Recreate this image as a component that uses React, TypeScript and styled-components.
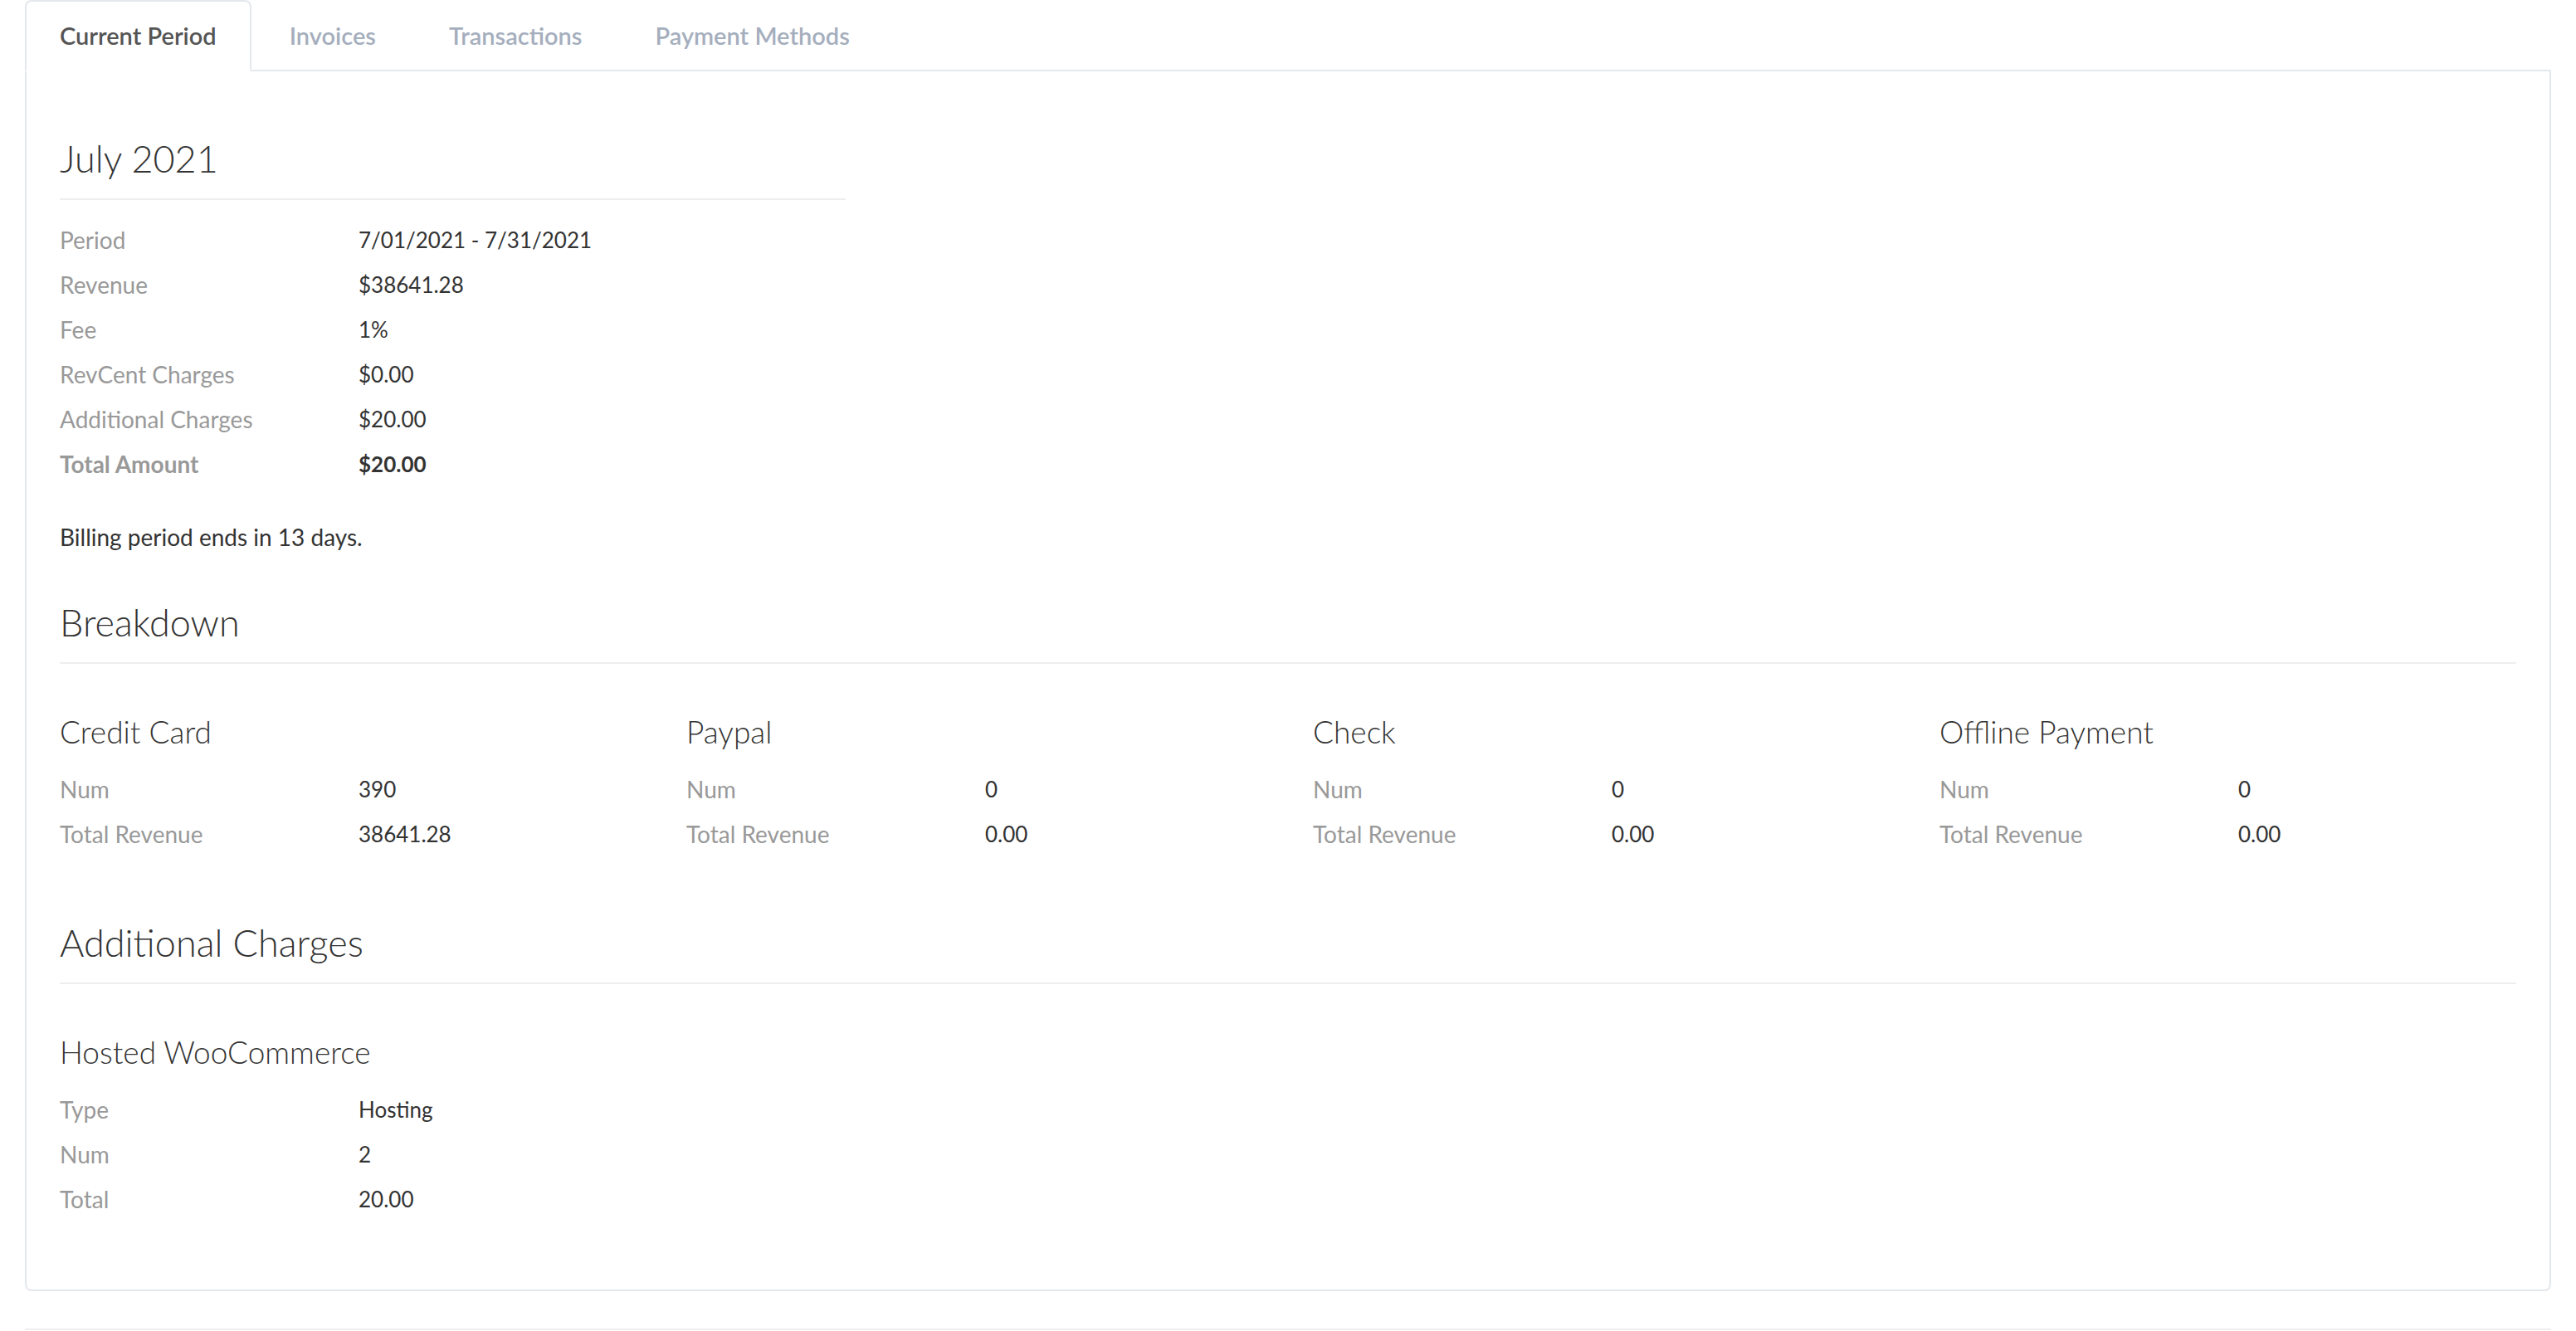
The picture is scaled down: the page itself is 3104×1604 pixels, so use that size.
import React, { useState } from 'react';
import styled, { createGlobalStyle } from 'styled-components';

const GlobalStyle = createGlobalStyle`
  html, body {
    margin: 0;
    padding: 0;
    background: #fff;
  }
  body {
    font-family: Lato, "Open Sans", sans-serif;
    color: #333;
    -webkit-font-smoothing: antialiased;
  }
  * {
    box-sizing: border-box;
  }
`;

const Page = styled.div`
  padding: 0 30px;
`;

const TabBar = styled.ul`
  display: flex;
  list-style: none;
  margin: 0;
  padding: 0;
  border-bottom: 2px solid #e4e7eb;
`;

const Tab = styled.li<{ $active?: boolean }>`
  margin: 0 4px -2px 0;
  padding: 0 40px;
  height: 86px;
  line-height: 82px;
  font-size: 29px;
  font-weight: 600;
  color: ${(p) => (p.$active ? '#555' : '#a5aebd')};
  border: 2px solid ${(p) => (p.$active ? '#e4e7eb' : 'transparent')};
  border-bottom-color: ${(p) => (p.$active ? '#fff' : 'transparent')};
  border-radius: 8px 8px 0 0;
  background: ${(p) => (p.$active ? '#fff' : 'transparent')};
  cursor: pointer;
`;

const Panel = styled.div`
  border: 2px solid #e4e7eb;
  border-top: none;
  border-radius: 0 0 8px 8px;
  padding: 84px 40px 82px;
`;

const SectionTitle = styled.h2<{ $gap?: number }>`
  margin: ${(p) => p.$gap ?? 0}px 0 0;
  font-size: 45px;
  font-weight: 300;
  line-height: 43px;
  color: #333;
  padding-bottom: 26px;
  border-bottom: 2px solid #eee;
`;

const SubTitle = styled.h3`
  margin: 64px 0 0;
  font-size: 37px;
  font-weight: 300;
  line-height: 36px;
  color: #333;
`;

const TopBlock = styled.div`
  width: calc((100% - 120px) / 3);
`;

const Details = styled.dl<{ $gap?: number }>`
  margin: ${(p) => p.$gap ?? 21}px 0 0;
`;

const Row = styled.div<{ $strong?: boolean }>`
  display: flex;
  align-items: flex-start;
  height: 54px;
  font-weight: ${(p) => (p.$strong ? 700 : 400)};
`;

const Term = styled.dt`
  width: 360px;
  flex: none;
  font-size: 28px;
  line-height: 54px;
  color: #999;
`;

const Value = styled.dd`
  margin: 0;
  font-size: 26px;
  line-height: 54px;
  color: #333;
`;

const Note = styled.p`
  margin: 34px 0 0;
  font-size: 28px;
  line-height: 54px;
  color: #333;
`;

const MethodGrid = styled.div`
  display: grid;
  grid-template-columns: repeat(4, 1fr);
  column-gap: 60px;
`;

const Method = styled.div`
  min-width: 0;
`;

const Footer = styled.div`
  margin-top: 45px;
  border-top: 2px solid #eee;
  height: 4px;
`;

const tabs = ['Current Period', 'Invoices', 'Transactions', 'Payment Methods'];

const summary: [string, string, boolean?][] = [
  ['Period', '7/01/2021 - 7/31/2021'],
  ['Revenue', '$38641.28'],
  ['Fee', '1%'],
  ['RevCent Charges', '$0.00'],
  ['Additional Charges', '$20.00'],
  ['Total Amount', '$20.00', true],
];

const methods = [
  { name: 'Credit Card', num: '390', total: '38641.28' },
  { name: 'Paypal', num: '0', total: '0.00' },
  { name: 'Check', num: '0', total: '0.00' },
  { name: 'Offline Payment', num: '0', total: '0.00' },
];

const charges = [
  { name: 'Hosted WooCommerce', type: 'Hosting', num: '2', total: '20.00' },
];

export default function App() {
  const [active, setActive] = useState(0);

  return (
    <>
      <GlobalStyle />
      <Page>
        <TabBar>
          {tabs.map((t, i) => (
            <Tab key={t} $active={i === active} onClick={() => setActive(i)}>
              {t}
            </Tab>
          ))}
        </TabBar>
        <Panel>
          <TopBlock>
            <SectionTitle>July 2021</SectionTitle>
            <Details>
              {summary.map(([label, value, strong]) => (
                <Row key={label} $strong={strong}>
                  <Term>{label}</Term>
                  <Value>{value}</Value>
                </Row>
              ))}
            </Details>
          </TopBlock>
          <Note>Billing period ends in 13 days.</Note>

          <SectionTitle $gap={55}>Breakdown</SectionTitle>
          <MethodGrid>
            {methods.map((m) => (
              <Method key={m.name}>
                <SubTitle>{m.name}</SubTitle>
                <Details $gap={24}>
                  <Row>
                    <Term>Num</Term>
                    <Value>{m.num}</Value>
                  </Row>
                  <Row>
                    <Term>Total Revenue</Term>
                    <Value>{m.total}</Value>
                  </Row>
                </Details>
              </Method>
            ))}
          </MethodGrid>

          <SectionTitle $gap={83}>Additional Charges</SectionTitle>
          {charges.map((c) => (
            <div key={c.name}>
              <SubTitle>{c.name}</SubTitle>
              <Details $gap={24}>
                <Row>
                  <Term>Type</Term>
                  <Value>{c.type}</Value>
                </Row>
                <Row>
                  <Term>Num</Term>
                  <Value>{c.num}</Value>
                </Row>
                <Row>
                  <Term>Total</Term>
                  <Value>{c.total}</Value>
                </Row>
              </Details>
            </div>
          ))}
        </Panel>
        <Footer />
      </Page>
    </>
  );
}
